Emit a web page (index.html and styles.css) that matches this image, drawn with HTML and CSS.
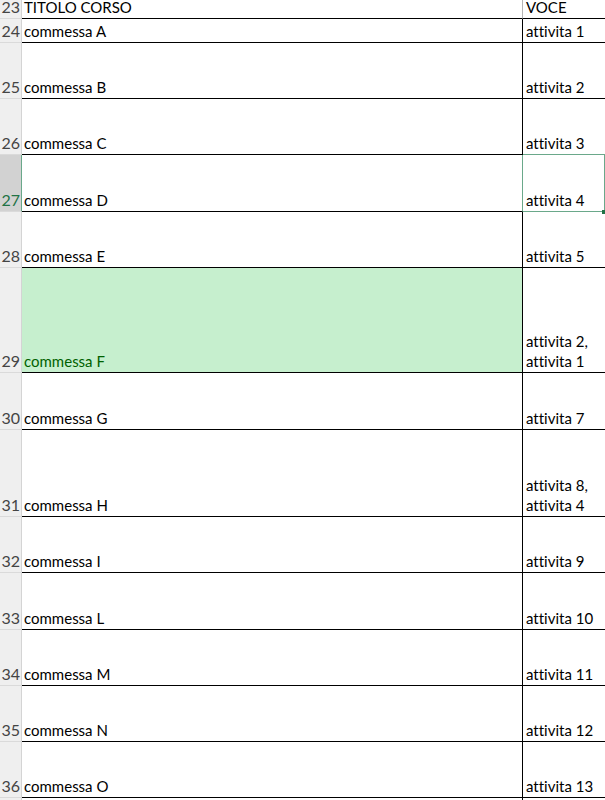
FILE: index.html
```html
<!DOCTYPE html>
<html lang="it">
<head>
<meta charset="utf-8">
<title>Foglio</title>
<link rel="stylesheet" href="styles.css">
</head>
<body>
<div class="sheet">
  <div class="row h19 head"><div class="rh"><span>23</span></div><div class="ca"><span>TITOLO CORSO</span></div><div class="cb"><span>VOCE</span></div></div>
  <div class="row h24"><div class="rh"><span>24</span></div><div class="ca"><span>commessa A</span></div><div class="cb"><span>attivita 1</span></div></div>
  <div class="row h56"><div class="rh"><span>25</span></div><div class="ca"><span>commessa B</span></div><div class="cb"><span>attivita 2</span></div></div>
  <div class="row h56"><div class="rh"><span>26</span></div><div class="ca"><span>commessa C</span></div><div class="cb"><span>attivita 3</span></div></div>
  <div class="row h57 sel"><div class="rh"><span>27</span></div><div class="ca"><span>commessa D</span></div><div class="cb"><span>attivita 4</span><i class="handle"></i></div></div>
  <div class="row h56"><div class="rh"><span>28</span></div><div class="ca"><span>commessa E</span></div><div class="cb"><span>attivita 5</span></div></div>
  <div class="row h105"><div class="rh"><span>29</span></div><div class="ca good"><span>commessa F</span></div><div class="cb"><span>attivita 2,<br>attivita 1</span></div></div>
  <div class="row h57"><div class="rh"><span>30</span></div><div class="ca"><span>commessa G</span></div><div class="cb"><span>attivita 7</span></div></div>
  <div class="row h87"><div class="rh"><span>31</span></div><div class="ca"><span>commessa H</span></div><div class="cb"><span>attivita 8,<br>attivita 4</span></div></div>
  <div class="row h56"><div class="rh"><span>32</span></div><div class="ca"><span>commessa I</span></div><div class="cb"><span>attivita 9</span></div></div>
  <div class="row h57"><div class="rh"><span>33</span></div><div class="ca"><span>commessa L</span></div><div class="cb"><span>attivita 10</span></div></div>
  <div class="row h56"><div class="rh"><span>34</span></div><div class="ca"><span>commessa M</span></div><div class="cb"><span>attivita 11</span></div></div>
  <div class="row h56"><div class="rh"><span>35</span></div><div class="ca"><span>commessa N</span></div><div class="cb"><span>attivita 12</span></div></div>
  <div class="row h56"><div class="rh"><span>36</span></div><div class="ca"><span>commessa O</span></div><div class="cb"><span>attivita 13</span></div></div>
  <div class="row h20 tail"><div class="rh"></div><div class="ca"></div><div class="cb"></div></div>
</div>
</body>
</html>
```

FILE: styles.css
```css
html, body {
  margin: 0;
  padding: 0;
  background: #ffffff;
}
.sheet {
  width: 605px;
  height: 800px;
  overflow: hidden;
  font-family: Lato, "Liberation Sans", sans-serif;
  font-size: 15px;
  line-height: 20px;
  color: #000;
  font-variant-ligatures: none;
}
.row {
  display: flex;
  box-sizing: border-box;
}
.h19 { height: 19px; }
.h20 { height: 20px; }
.h24 { height: 24px; }
.h56 { height: 56px; }
.h57 { height: 57px; }
.h87 { height: 87px; }
.h105 { height: 105px; }

.rh {
  box-sizing: border-box;
  width: 22px;
  flex: none;
  background: #efefef;
  border-right: 1px solid #d4d4d4;
  border-bottom: 1px solid #dadada;
  display: flex;
  align-items: flex-end;
  justify-content: flex-end;
  overflow: hidden;
  color: #444444;
  font-size: 16px;
  padding: 0 1px 1px 0;
  white-space: nowrap;
}
.ca {
  box-sizing: border-box;
  width: 501px;
  flex: none;
  border-right: 1px solid #000;
  border-bottom: 1px solid #000;
  display: flex;
  align-items: flex-end;
  padding: 0 0 1px 2px;
  white-space: nowrap;
}
.cb {
  box-sizing: border-box;
  flex: 1;
  border-bottom: 1px solid #000;
  display: flex;
  align-items: flex-end;
  padding: 0 0 1px 3px;
  white-space: nowrap;
  position: relative;
}
.head .rh, .head .ca, .head .cb {
  line-height: 16px;
  padding-bottom: 3px;
}
.head .ca { border-right-color: #b5b5b5; }
.good {
  background: #c6efce;
  color: #006100;
}
.sel .rh {
  background: #d2d2d2;
  color: #217346;
  border-right-color: #6aa88a;
}
.sel .ca {
  border-right-color: #6aa88a;
}
.sel .cb {
  border-top: 1px solid #6aa88a;
  border-right: 1px solid #6aa88a;
  border-bottom-color: #6aa88a;
  margin-top: -1px;
}
.handle {
  position: absolute;
  right: -2px;
  bottom: -3px;
  width: 4px;
  height: 4px;
  background: #217346;
}
.tail .ca, .tail .cb { border-bottom: none; }
```
